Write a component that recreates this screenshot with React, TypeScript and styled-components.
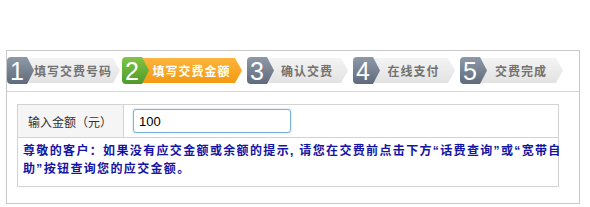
import React, { useEffect, useRef } from "react";
import styled, { createGlobalStyle, css } from "styled-components";

const GlobalStyle = createGlobalStyle`
  html, body { margin: 0; padding: 0; background: #fff; }
  body { font-family: "Liberation Sans", "Noto Sans CJK SC", sans-serif; }
`;

const Page = styled.div`
  padding: 50px 0 0 6px;
`;

const Panel = styled.div`
  box-sizing: border-box;
  width: 574px;
  height: 154px;
  border: 1px solid #c9c9c9;
`;

const StepsBar = styled.div`
  display: flex;
  gap: 5px;
  padding: 6px 0 7px 0;
  border-bottom: 1px solid #d6d6d6;
`;

const Step = styled.div<{ $w: number }>`
  display: flex;
  align-items: center;
  width: ${(p) => p.$w}px;
  height: 27px;
`;

const Badge = styled.div<{ $active?: boolean }>`
  position: relative;
  z-index: 1;
  flex: none;
  width: 27px;
  height: 27px;
  box-sizing: border-box;
  padding-right: 7px;
  border-radius: 4px 0 0 4px;
  clip-path: polygon(0 0, 20px 0, 27px 50%, 20px 100%, 0 100%);
  background: ${(p) =>
    p.$active
      ? "linear-gradient(#80c447, #4f9a28)"
      : "linear-gradient(#8e99a8, #5f6b7c)"};
  color: #fff;
  font-family: "Liberation Sans", Arial, sans-serif;
  font-size: 25px;
  line-height: 28px;
  text-align: center;
`;

const Label = styled.div<{ $active?: boolean }>`
  flex: 1;
  height: 25px;
  margin-left: -7px;
  padding: 0 8px 0 7px;
  display: flex;
  align-items: center;
  justify-content: center;
  clip-path: polygon(0 0, calc(100% - 7px) 0, 100% 50%, calc(100% - 7px) 100%, 0 100%);
  font-size: 12px;
  font-weight: bold;
  letter-spacing: 1px;
  white-space: nowrap;
  ${(p) =>
    p.$active
      ? css`
          background: linear-gradient(#fdb43c, #f39a12);
          color: #fff;
        `
      : css`
          background: linear-gradient(#f4f4f4, #e2e2e2);
          color: #727272;
        `}
`;

const Body = styled.div`
  padding: 12px 0 0 10px;
`;

const Table = styled.div`
  box-sizing: border-box;
  width: 542px;
  display: grid;
  grid-template-columns: 106px 1fr;
  border: 1px solid #d3d3d3;
`;

const LabelCell = styled.div`
  height: 32px;
  display: flex;
  align-items: center;
  padding-left: 10px;
  background: #f5f5f5;
  border-right: 1px solid #d3d3d3;
  font-size: 12px;
  color: #333;
  white-space: nowrap;
`;

const InputCell = styled.div`
  height: 32px;
  padding: 4px 0 0 9px;
  box-sizing: border-box;
`;

const AmountInput = styled.input`
  box-sizing: border-box;
  width: 158px;
  height: 24px;
  padding: 0 5px;
  border: 1px solid #80b3d8;
  border-radius: 3px;
  box-shadow: 0 0 2px rgba(110, 170, 215, 0.6);
  outline: none;
  font-family: "Liberation Sans", Arial, sans-serif;
  font-size: 13px;
  color: #000;
`;

const NoticeCell = styled.div`
  grid-column: 1 / span 2;
  height: 49px;
  box-sizing: border-box;
  border-top: 1px solid #d3d3d3;
  padding: 4px 0 0 5px;
  font-size: 12px;
  font-weight: bold;
  letter-spacing: 1.35px;
  line-height: 18px;
  color: #1414a3;
  white-space: nowrap;
`;

const steps = [
  { n: "1", label: "填写交费号码", w: 110 },
  { n: "2", label: "填写交费金额", w: 120, active: true },
  { n: "3", label: "确认交费", w: 101 },
  { n: "4", label: "在线支付", w: 102 },
  { n: "5", label: "交费完成", w: 103 },
];

export default function App() {
  const ref = useRef<HTMLInputElement>(null);
  useEffect(() => {
    const el = ref.current;
    if (el) {
      el.focus();
      el.setSelectionRange(3, 3);
    }
  }, []);
  return (
    <>
      <GlobalStyle />
      <Page>
        <Panel>
          <StepsBar>
            {steps.map((s) => (
              <Step key={s.n} $w={s.w}>
                <Badge $active={s.active}>{s.n}</Badge>
                <Label $active={s.active}>{s.label}</Label>
              </Step>
            ))}
          </StepsBar>
          <Body>
            <Table>
              <LabelCell>输入金额（元）</LabelCell>
              <InputCell>
                <AmountInput ref={ref} defaultValue="100" />
              </InputCell>
              <NoticeCell>
                尊敬的客户：如果没有应交金额或余额的提示, 请您在交费前点击下方“话费查询”或“宽带自
                <br />
                助”按钮查询您的应交金额。
              </NoticeCell>
            </Table>
          </Body>
        </Panel>
      </Page>
    </>
  );
}
